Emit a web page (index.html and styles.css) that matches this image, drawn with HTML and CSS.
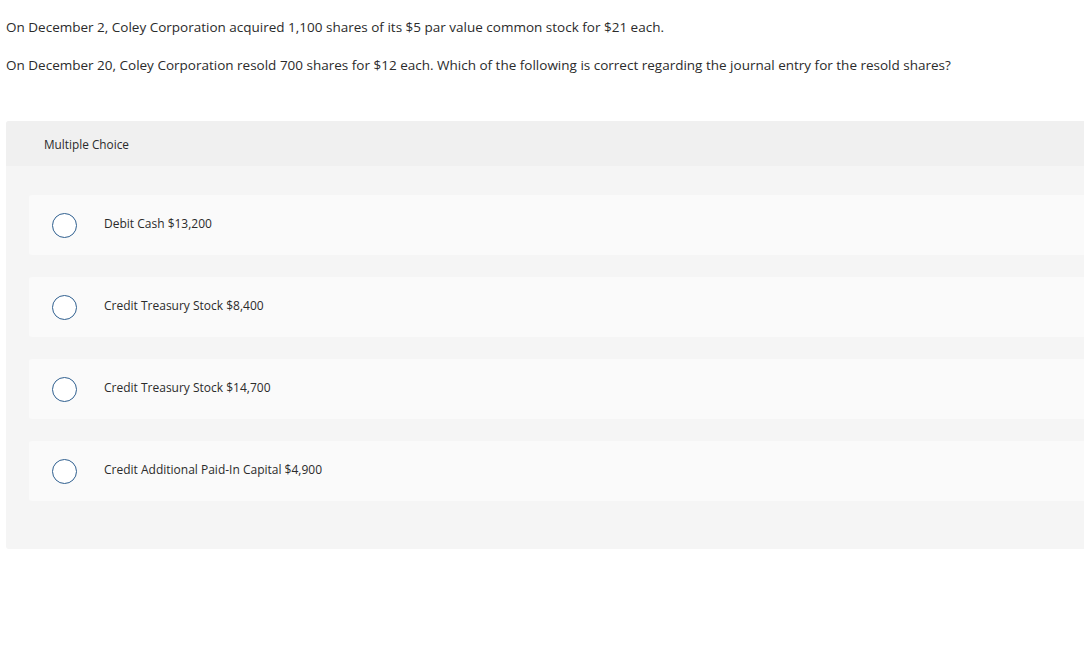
FILE: index.html
```html
<!DOCTYPE html>
<html>
<head>
<meta charset="utf-8">
<link rel="stylesheet" href="styles.css">
</head>
<body>
<div class="question">
  <p class="q-line q-first">On December 2, Coley Corporation acquired 1,100 shares of its $5 par value common stock for $21 each.</p>
  <p class="q-line q-second">On December 20, Coley Corporation resold 700 shares for $12 each. Which of the following is correct regarding the journal entry for the resold shares?</p>
</div>
<div class="mc">
  <div class="mc-header">Multiple Choice</div>
  <div class="mc-body">
    <div class="option"><span class="radio"></span><span class="label">Debit Cash $13,200</span></div>
    <div class="option"><span class="radio"></span><span class="label">Credit Treasury Stock $8,400</span></div>
    <div class="option"><span class="radio"></span><span class="label">Credit Treasury Stock $14,700</span></div>
    <div class="option"><span class="radio"></span><span class="label">Credit Additional Paid-In Capital $4,900</span></div>
  </div>
</div>
</body>
</html>
```
FILE: styles.css
```css
html, body {
  margin: 0;
  padding: 0;
  background: #fff;
}
body {
  padding-left: 6px;
  font-family: "Open Sans", Lato, "Liberation Sans", sans-serif;
  color: #2b2b2b;
}
.question {
  padding-top: 18px;
}
.q-line {
  margin: 0;
  font-size: 13.5px;
  line-height: 18px;
}
.q-second {
  margin-top: 20px;
}
.mc {
  margin-top: 47px;
  background: #f5f5f5;
  border-radius: 3px 0 0 3px;
  padding-bottom: 48px;
}
.mc-header {
  height: 45px;
  background: #f0f0f0;
  display: flex;
  align-items: center;
  padding-left: 38px;
  font-size: 11.8px;
  border-radius: 3px 0 0 0;
}
.mc-body {
  padding-top: 29px;
  padding-left: 23px;
  display: flex;
  flex-direction: column;
  gap: 22px;
}
.option {
  height: 60px;
  background: #fafafa;
  border-radius: 3px 0 0 3px;
  display: flex;
  align-items: center;
  padding-left: 23px;
}
.radio {
  width: 23px;
  height: 23px;
  border: 1.5px solid #2f5f8f;
  border-radius: 50%;
  background: #fff;
  flex: none;
}
.label {
  margin-left: 27px;
  font-size: 12px;
  line-height: 16px;
  margin-top: -2px;
}
```
